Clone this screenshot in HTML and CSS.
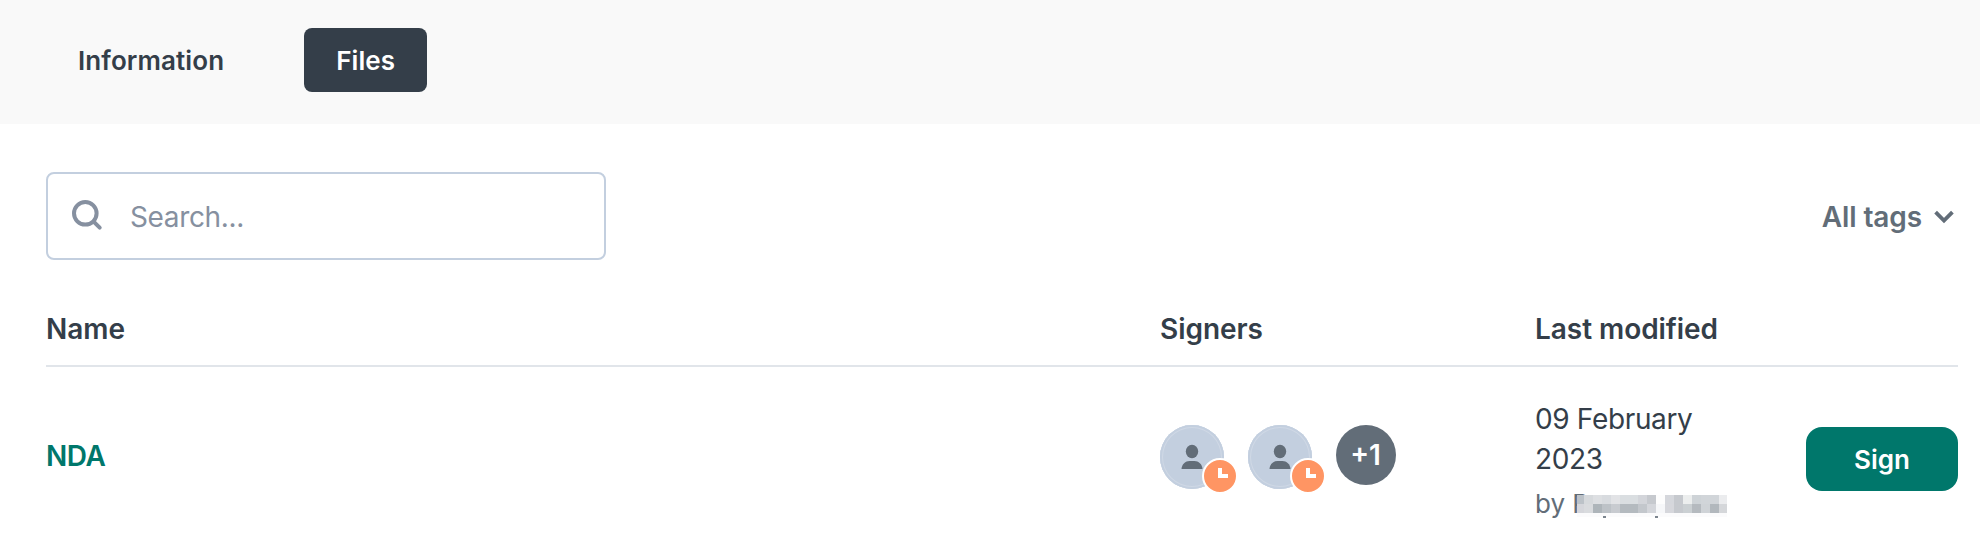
FILE: index.html
```html
<!DOCTYPE html>
<html lang="en">
<head>
  <meta charset="UTF-8" />
  <title>Files</title>
  <link rel="stylesheet" href="styles.css">
</head>
<body>

  <nav class="tabs">
    <a class="tab">Information</a>
    <a class="tab active">Files</a>
  </nav>

  <main class="content">

    <div class="toolbar">
      <label class="search">
        <svg class="search-icon" width="32" height="32" viewBox="0 0 32 32" fill="none" stroke="#8690a0" stroke-width="4" stroke-linecap="round">
          <circle cx="14.3" cy="13.3" r="11.3" />
          <path d="M22.600 21.600l6.100 6.100" />
        </svg>
        <input type="text" class="search-input" placeholder="Search..." />
      </label>
      <button type="button" class="filter">
        All tags
        <svg class="chevron" width="20" height="14" viewBox="0 0 20 14" fill="none" stroke="#626d78" stroke-width="3.8">
          <path d="M1.600 2.200l8.400 8.400 8.400-8.400" />
        </svg>
      </button>
    </div>

    <div class="row head">
      <div>Name</div>
      <div>Signers</div>
      <div>Last modified</div>
    </div>

    <div class="row file">
      <a class="file-name">NDA</a>
      <div class="signers">
        <div class="avatar">
          <svg width="22" height="26" viewBox="0 0 22 26" fill="#626d78">
            <ellipse cx="11" cy="7.5" rx="6.200" ry="6.800" />
            <path d="M.5 25c.3-5 4-8 8-8h5c4 0 7.700 3 8 8z" />
          </svg>
          <span class="badge"></span>
        </div>
        <div class="avatar">
          <svg width="22" height="26" viewBox="0 0 22 26" fill="#626d78">
            <ellipse cx="11" cy="7.5" rx="6.200" ry="6.800" />
            <path d="M.5 25c.3-5 4-8 8-8h5c4 0 7.700 3 8 8z" />
          </svg>
          <span class="badge"></span>
        </div>
        <div class="more">+1</div>
      </div>
      <div class="modified">
        <div class="date">09 February 2023</div>
        <div class="author">
          by R
          <!-- redacted name -->
          <svg class="redacted" width="150" height="26" viewBox="0 0 150 26" shape-rendering="crispEdges">
            <rect y="2" width="150" height="22" fill="#fbfbfc" />
            <rect x="0" y="2" width="7" height="9" fill="#bcc2c8" />
            <rect x="7" y="2" width="9" height="9" fill="#d6d9dc" />
            <rect x="16" y="2" width="9" height="9" fill="#dddfe2" />
            <rect x="25" y="2" width="9" height="9" fill="#d8dbdf" />
            <rect x="34" y="2" width="9" height="9" fill="#e2e3e6" />
            <rect x="43" y="2" width="18" height="9" fill="#dadee1" />
            <rect x="61" y="2" width="9" height="9" fill="#d3d5da" />
            <rect x="70" y="2" width="9" height="9" fill="#c6c9ce" />
            <rect x="79" y="2" width="9" height="9" fill="#fdfdfd" />
            <rect x="88" y="2" width="9" height="9" fill="#d5d7dc" />
            <rect x="97" y="2" width="9" height="9" fill="#c6c9ce" />
            <rect x="106" y="2" width="9" height="9" fill="#eceeee" />
            <rect x="115" y="2" width="9" height="9" fill="#ced3d7" />
            <rect x="124" y="2" width="18" height="9" fill="#d1d5d9" />
            <rect x="142" y="2" width="8" height="9" fill="#ebecee" />
            <rect x="0" y="11" width="7" height="9" fill="#d5d6db" />
            <rect x="7" y="11" width="9" height="9" fill="#d9dbde" />
            <rect x="16" y="11" width="9" height="9" fill="#aeb5ba" />
            <rect x="25" y="11" width="9" height="9" fill="#bdc2c7" />
            <rect x="34" y="11" width="9" height="9" fill="#c8cbd0" />
            <rect x="43" y="11" width="18" height="9" fill="#b4babf" />
            <rect x="61" y="11" width="9" height="9" fill="#c3c7cc" />
            <rect x="70" y="11" width="9" height="9" fill="#d4d6db" />
            <rect x="79" y="11" width="9" height="9" fill="#f6f7f9" />
            <rect x="88" y="11" width="9" height="9" fill="#d6d7dc" />
            <rect x="97" y="11" width="9" height="9" fill="#c6c9ce" />
            <rect x="106" y="11" width="9" height="9" fill="#cbd0d3" />
            <rect x="115" y="11" width="9" height="9" fill="#b5babf" />
            <rect x="124" y="11" width="9" height="9" fill="#cfd3d7" />
            <rect x="133" y="11" width="9" height="9" fill="#b2b8bd" />
            <rect x="142" y="11" width="8" height="9" fill="#d5d7da" />
            <rect x="26" y="23" width="3" height="2" fill="#7c858e" />
            <rect x="78" y="23" width="3" height="2" fill="#7c858e" />
          </svg>
        </div>
      </div>
      <button type="button" class="sign">Sign</button>
    </div>

  </main>

</body>
</html>
```
FILE: styles.css
```css
* {
  box-sizing: border-box;
}
body {
  margin: 0;
  font-family: Inter, sans-serif;
  font-size: 28px;
  color: #343e49;
  background-color: #fff;
}
button {
  font-family: inherit;
  border: none;
}
.tabs {
  display: flex;
  gap: 48px;
  height: 124px;
  padding: 28px 46px 32px;
  background-color: #f9f9f9;
}
.tab {
  padding: 1px 32px 0;
  font-size: 26px;
  font-weight: 600;
  line-height: 63px;
  letter-spacing: 0.1px;
  border-radius: 8px;
}
.tab.active {
  background-color: #343e49;
  color: #fff;
}
.content {
  padding: 48px 22px 0 46px;
}
.toolbar {
  display: flex;
  justify-content: space-between;
  align-items: center;
}
.search {
  display: flex;
  align-items: center;
  width: 560px;
  height: 88px;
  padding: 0 23px;
  border: 2px solid #c3cfdf;
  border-radius: 8px;
}
.search-icon {
  margin-right: 27px;
}
.search-input {
  flex: 1;
  min-width: 0;
  padding: 2px 0 0;
  font: inherit;
  letter-spacing: -0.35px;
  border: none;
  outline: none;
}
.search-input::placeholder {
  color: #8690a0;
}
.filter {
  display: flex;
  align-items: center;
  padding: 2px 4px 0 0;
  font-size: 28px;
  font-weight: 600;
  letter-spacing: -0.1px;
  color: #626d78;
  background: none;
}
.chevron {
  margin-left: 12px;
}
.row {
  display: grid;
  grid-template-columns: 1114px 375px 1fr 152px;
}
.head {
  height: 107px;
  padding-top: 49px;
  font-weight: 600;
  line-height: 40px;
  letter-spacing: -0.05px;
  border-bottom: 2px solid #e1e5ea;
}
.file {
  padding-top: 32px;
}
.file-name {
  margin-top: 37px;
  font-weight: 600;
  line-height: 40px;
  letter-spacing: -0.4px;
  color: #00776b;
}
.signers {
  display: flex;
  gap: 24px;
  padding-top: 26px;
}
.avatar {
  position: relative;
  display: flex;
  justify-content: center;
  width: 64px;
  height: 64px;
  padding-top: 19px;
  border-radius: 50%;
  background-color: #c3cfdf;
  box-shadow: inset 0 0 0 2px #c3cfdf, inset 0 0 0 3px #cfd8e5;
}
/* pending signature clock */
.badge {
  position: absolute;
  left: 42px;
  top: 33px;
  width: 36px;
  height: 36px;
  border: 2px solid #fff;
  border-radius: 50%;
  background-color: #ff9563;
}
.badge::after {
  content: "";
  position: absolute;
  left: 14px;
  top: 8px;
  width: 6px;
  height: 6px;
  border-left: 4px solid #fff;
  border-bottom: 4px solid #fff;
}
.more {
  width: 60px;
  height: 60px;
  padding-right: 1px;
  font-weight: 600;
  line-height: 61px;
  text-align: center;
  color: #fff;
  border-radius: 50%;
  background-color: #626d78;
}
.date {
  width: 200px;
  line-height: 40px;
  letter-spacing: -0.35px;
}
.author {
  display: flex;
  height: 49px;
  font-size: 26px;
  line-height: 49px;
  color: #626d78;
  white-space: nowrap;
}
.redacted {
  flex: none;
  margin: 14px 0 0 -12px;
  background: linear-gradient(#fff, #fff) 0 2px no-repeat;
}
.sign {
  height: 64px;
  margin-top: 28px;
  font-size: 26px;
  font-weight: 600;
  color: #fff;
  border-radius: 16px;
  background-color: #00776b;
}
```
